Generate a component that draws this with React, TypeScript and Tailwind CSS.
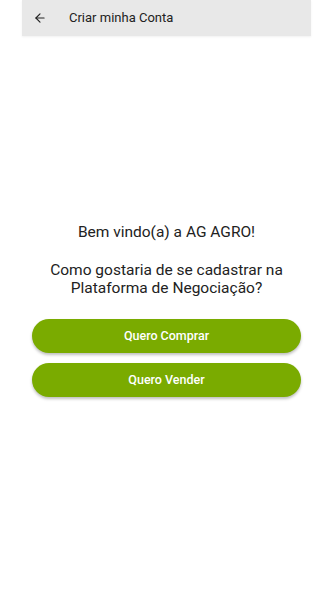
import { ArrowLeft } from 'lucide-react'

export default function App() {
  return (
    <div className="min-h-screen bg-white font-['Roboto',sans-serif]">
      <div className="mx-auto w-[289px]">
        <header className="flex h-[36px] items-center bg-[#e8e8e8] shadow-[0_1px_2px_rgba(0,0,0,0.06)]">
          <ArrowLeft className="ml-[11px] h-[14px] w-[14px] text-[#222]" strokeWidth={2} />
          <span className="ml-[22px] text-[13px] text-[#222]">Criar minha Conta</span>
        </header>

        <main className="px-[10px] pt-[187px]">
          <p className="text-center text-[15.5px] leading-[18px] text-[#222]">Bem vindo(a) a AG AGRO!</p>
          <p className="mt-[20px] text-center text-[15.5px] leading-[18px] text-[#222]">
            Como gostaria de se cadastrar na
            <br />
            Plataforma de Negociação?
          </p>

          <div className="mt-[22px] flex flex-col gap-[10px]">
            <button className="h-[34px] w-full rounded-full bg-[#7aab00] text-[12.5px] font-medium text-white shadow-[0_2px_3px_rgba(0,0,0,0.25)]">
              Quero Comprar
            </button>
            <button className="h-[34px] w-full rounded-full bg-[#7aab00] text-[12.5px] font-medium text-white shadow-[0_2px_3px_rgba(0,0,0,0.25)]">
              Quero Vender
            </button>
          </div>
        </main>
      </div>
    </div>
  )
}
